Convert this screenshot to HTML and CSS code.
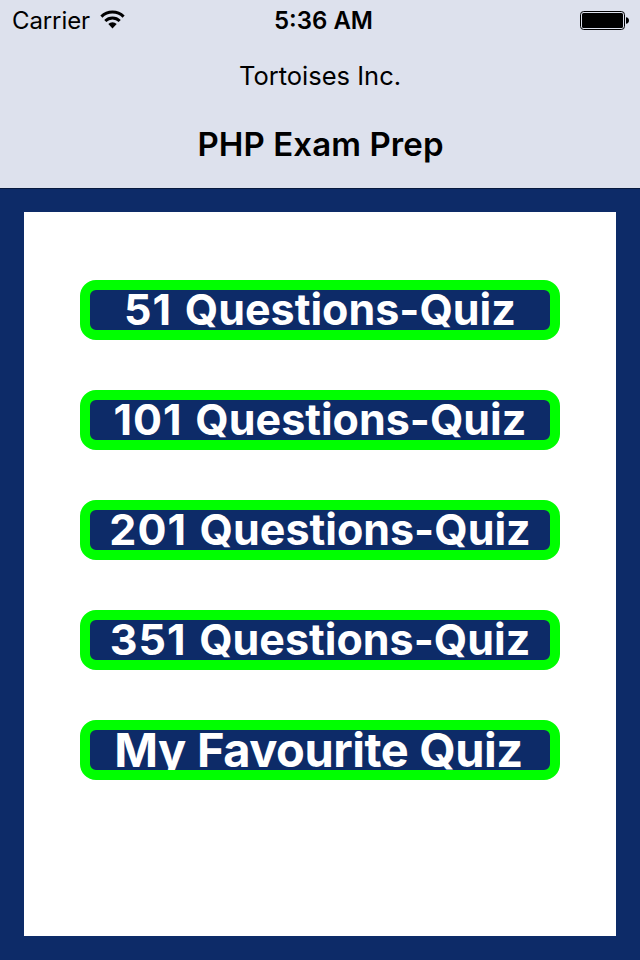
FILE: index.html
```html
<!DOCTYPE html>
<html lang="en">
<head>
    <meta charset="UTF-8">
    <meta name="viewport" content="width=device-width, initial-scale=1.0">
    <title>PHP Exam Prep</title>
    <link rel="stylesheet" href="styles.css">
</head>
<body>

    <header class="header">
        <div class="status-bar">
            <div class="carrier">
                <span class="carrier-name">Carrier</span>
                <svg class="wifi" width="25" height="19" viewBox="0 0 26 20" fill="none" stroke="#000" stroke-width="3.1">
                    <path d="M1.3 7a16.6 16.6 0 0 1 23.4 0"/>
                    <path d="M5.4 11.5a10.8 10.8 0 0 1 15.2 0"/>
                    <path d="M13 19.4l-4.4-4.6a6.2 6.2 0 0 1 8.8 0z" fill="#000" stroke="none"/>
                </svg>
            </div>
            <span class="time">5:36 AM</span>
            <svg class="battery" width="50" height="20" viewBox="0 0 50 20">
                <rect x="0.5" y="0.5" width="44" height="18" rx="3.2" fill="none" stroke="#000"/>
                <rect x="2" y="2" width="41" height="15" rx="1.5"/>
                <path d="M46 6.2c1.8 0 3 1.4 3 3.3s-1.2 3.3-3 3.3z"/>
            </svg>
        </div>
        <div class="company">Tortoises Inc.</div>
        <h1 class="title">PHP Exam Prep</h1>
    </header>

    <main class="menu">
        <button class="quiz-button"><span class="count">51</span> Questions-Quiz</button>
        <button class="quiz-button"><span class="count">101</span> Questions-Quiz</button>
        <button class="quiz-button"><span class="count">201</span> Questions-Quiz</button>
        <button class="quiz-button"><span class="count">351</span> Questions-Quiz</button>
        <button class="quiz-button favourite">My Favourite Quiz</button>
    </main>

</body>
</html>
```
FILE: styles.css
```css
/* General styles */
* {
    box-sizing: border-box;
}

body {
    margin: 0;
    height: 960px;
    display: flex;
    flex-direction: column;
    background-color: #0d2b68;
    font-family: Inter, "Liberation Sans", sans-serif;
    color: #000;
    overflow: hidden;
}

/* Header styles */
.header {
    height: 188px;
    background-color: #dde1ed;
    box-shadow: 0 1px 0 rgba(0, 0, 0, 0.4);
    text-align: center;
}

.status-bar {
    display: grid;
    grid-template-columns: 1fr auto 1fr;
    align-items: center;
    height: 42px;
    padding: 0 10px 0 12px;
    font-size: 24px;
    line-height: 42px;
}

.carrier {
    display: flex;
    align-items: center;
    gap: 10px;
}

.carrier-name {
    letter-spacing: -0.1px;
}

.wifi {
    margin-bottom: 3px;
}

.time {
    margin-left: 5px;
    font-weight: 600;
}

.battery {
    justify-self: end;
}

.company {
    margin-top: 14px;
    font-size: 25.5px;
    line-height: 40px;
}

.title {
    margin: 28px 0 0;
    padding-left: 1px;
    font-size: 33px;
    font-weight: 600;
    letter-spacing: 0.1px;
    line-height: 40px;
}

/* Menu styles */
.menu {
    flex: 1;
    display: flex;
    flex-direction: column;
    align-items: center;
    gap: 50px;
    margin: 24px;
    padding-top: 68px;
    background-color: #fff;
}

.quiz-button {
    display: block;
    width: 480px;
    height: 60px;
    padding: 0 0 2px;
    border: 10px solid #00ff00;
    border-radius: 16px;
    background-color: #0d2b68;
    color: #fff;
    font-family: inherit;
    font-size: 43px;
    font-weight: 700;
    line-height: 38px;
    text-align: center;
    word-spacing: 2.5px;
    white-space: nowrap;
    overflow: hidden;
}

.count {
    letter-spacing: 1px;
}

.favourite {
    padding: 0 3px 1px 0;
    font-size: 47px;
    letter-spacing: -0.5px;
    line-height: 39px;
    word-spacing: 0.5px;
}
```
